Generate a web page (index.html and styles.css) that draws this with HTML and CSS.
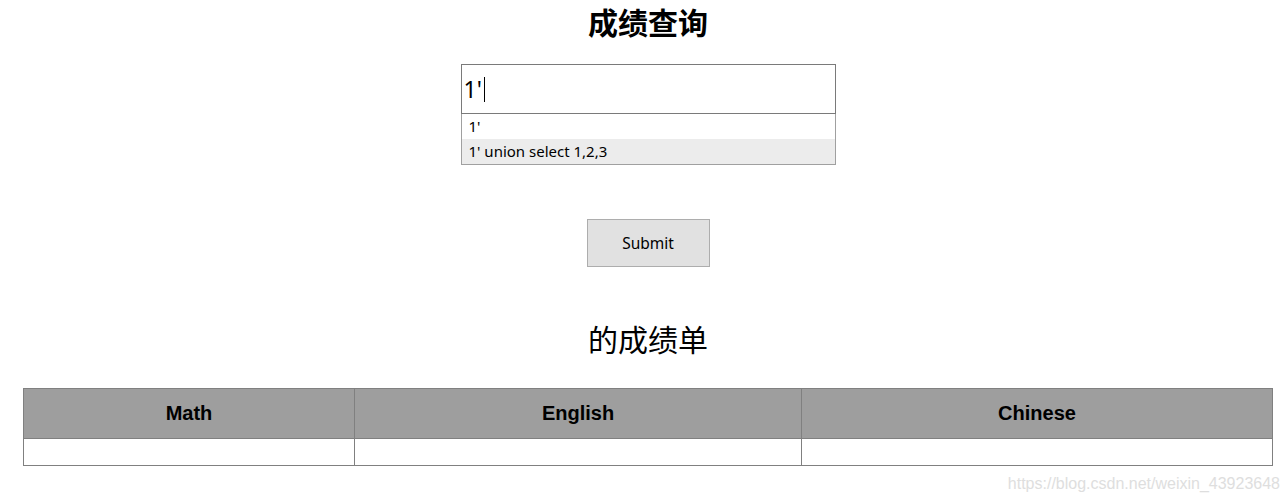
FILE: index.html
```html
<!DOCTYPE html>
<html lang="zh">
<head>
<meta charset="utf-8">
<title>成绩查询</title>
<link rel="stylesheet" href="styles.css">
</head>
<body>
<h1 class="title">成绩查询</h1>
<form class="query">
  <div class="field">
    <div class="input"><span class="value">1'</span><span class="caret"></span></div>
    <ul class="suggest">
      <li class="opt">1'</li>
      <li class="opt opt-hover">1' union select 1,2,3</li>
    </ul>
  </div>
  <button type="button" class="submit">Submit</button>
</form>
<h2 class="subtitle">的成绩单</h2>
<table class="scores">
  <colgroup>
    <col class="c1"><col class="c2"><col class="c3">
  </colgroup>
  <thead>
    <tr><th>Math</th><th>English</th><th>Chinese</th></tr>
  </thead>
  <tbody>
    <tr><td></td><td></td><td></td></tr>
  </tbody>
</table>
<div class="watermark">https://blog.csdn.net/weixin_43923648</div>
</body>
</html>
```
FILE: styles.css
```css
html, body {
  margin: 0;
  padding: 0;
  background: #fff;
}
body {
  font-family: "Noto Sans", "Noto Sans CJK SC", sans-serif;
  color: #000;
  position: relative;
  height: 503px;
  overflow: hidden;
  padding-left: 8px;
  box-sizing: border-box;
}
.title {
  margin: 0;
  text-align: center;
  font-family: "Noto Sans CJK SC", sans-serif;
  font-size: 30px;
  font-weight: bold;
  line-height: 42px;
}
.query {
  display: flex;
  flex-direction: column;
  align-items: center;
  margin-top: 22px;
}
.field {
  position: relative;
  width: 375px;
}
.input {
  box-sizing: border-box;
  height: 50px;
  border: 1px solid #7a7a7a;
  display: flex;
  align-items: center;
  padding-left: 2px;
  font-family: "Noto Sans", sans-serif;
  font-size: 23px;
}
.value {
  line-height: 1;
}
.caret {
  display: inline-block;
  width: 1px;
  height: 25px;
  background: #000;
  margin-left: 2px;
}
.suggest {
  position: absolute;
  top: 50px;
  left: 0;
  right: 0;
  margin: 0;
  padding: 0;
  list-style: none;
  box-sizing: border-box;
  border: 1px solid #a0a0a0;
  border-top: 0;
  background: #fff;
  font-size: 15px;
}
.opt {
  height: 25px;
  line-height: 25px;
  padding-left: 7px;
}
.opt-hover {
  background: #ececec;
}
.submit {
  margin-top: 105px;
  width: 123px;
  height: 48px;
  background: #e1e1e1;
  border: 1px solid #adadad;
  font-family: "Noto Sans", sans-serif;
  font-size: 15.5px;
  color: #000;
  padding: 0;
}
.subtitle {
  margin: 50px 0 0;
  text-align: center;
  font-family: "Noto Sans CJK SC", sans-serif;
  font-size: 30px;
  font-weight: normal;
  line-height: 42px;
}
.scores {
  margin: 29px 0 0 15px;
  width: 1249px;
  border-collapse: collapse;
  table-layout: fixed;
  font-family: "Liberation Sans", Arial, sans-serif;
}
.c1 { width: 331px; }
.c2 { width: 447px; }
.c3 { width: 471px; }
.scores th,
.scores td {
  border: 1px solid #808080;
  padding: 0;
}
.scores th {
  background: #9e9e9e;
  height: 49px;
  font-size: 20px;
  font-weight: bold;
  text-align: center;
}
.scores td {
  height: 26px;
}
.watermark {
  position: absolute;
  right: 8px;
  top: 475px;
  font-family: "Liberation Sans", Arial, sans-serif;
  font-size: 16px;
  color: #dedede;
}
```
